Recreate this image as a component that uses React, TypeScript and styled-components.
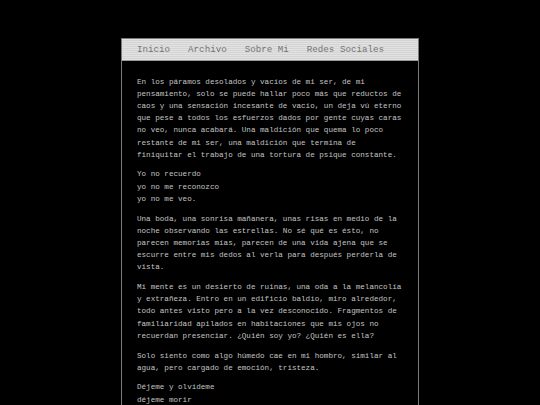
import styled, { createGlobalStyle } from "styled-components";

const GlobalStyle = createGlobalStyle`
  html, body {
    margin: 0;
    padding: 0;
    background: #000;
  }
`;

const Page = styled.div`
  padding-top: 38px;
  display: flex;
  justify-content: center;
`;

const Frame = styled.div`
  width: 296px;
  border: 1px solid #7a7a7a;
  border-bottom: none;
  background: #000;
`;

const Nav = styled.nav`
  height: 21px;
  display: flex;
  align-items: center;
  gap: 18px;
  padding: 0 15px;
  background: repeating-linear-gradient(
    to bottom,
    #e2e2e2 0px,
    #e2e2e2 1px,
    #d4d4d4 1px,
    #d4d4d4 2px
  );
  border-bottom: 1px solid #9a9a9a;
`;

const NavLink = styled.a`
  font-family: "Liberation Mono", "Courier New", monospace;
  font-size: 9.2px;
  color: #747474;
  text-decoration: none;
  cursor: pointer;
`;

const Content = styled.div`
  padding: 7px 15px 0 15px;
  font-family: "Liberation Mono", "Courier New", monospace;
  font-size: 7.6px;
  line-height: 12.2px;
  color: #c4c4c4;
`;

const Para = styled.p`
  margin: 7.5px 0;
`;

const App = () => {
  return (
    <>
      <GlobalStyle />
      <Page>
        <Frame>
          <Nav>
            <NavLink>Inicio</NavLink>
            <NavLink>Archivo</NavLink>
            <NavLink>Sobre Mi</NavLink>
            <NavLink>Redes Sociales</NavLink>
          </Nav>
          <Content>
            <Para>
              En los páramos desolados y vacíos de mi ser, de mi pensamiento,
              solo se puede hallar poco más que reductos de caos y una
              sensación incesante de vacío, un deja vú eterno que pese a todos
              los esfuerzos dados por gente cuyas caras no veo, nunca acabará.
              Una maldición que quema lo poco restante de mi ser, una maldición
              que termina de finiquitar el trabajo de una tortura de psique
              constante.
            </Para>
            <Para>
              Yo no recuerdo
              <br />
              yo no me reconozco
              <br />
              yo no me veo.
            </Para>
            <Para>
              Una boda, una sonrisa mañanera, unas risas en medio de la noche
              observando las estrellas. No sé qué es ésto, no parecen memorias
              mías, parecen de una vida ajena que se escurre entre mis dedos al
              verla para después perderla de vista.
            </Para>
            <Para>
              Mi mente es un desierto de ruinas, una oda a la melancolía y
              extrañeza. Entro en un edificio baldío, miro alrededor, todo
              antes visto pero a la vez desconocido. Fragmentos de familiaridad
              apilados en habitaciones que mis ojos no recuerdan presenciar.
              ¿Quién soy yo? ¿Quién es ella?
            </Para>
            <Para>
              Solo siento como algo húmedo cae en mi hombro, similar al agua,
              pero cargado de emoción, tristeza.
            </Para>
            <Para>
              Déjeme y olvídeme
              <br />
              déjeme morir
            </Para>
          </Content>
        </Frame>
      </Page>
    </>
  );
};

export default App;
